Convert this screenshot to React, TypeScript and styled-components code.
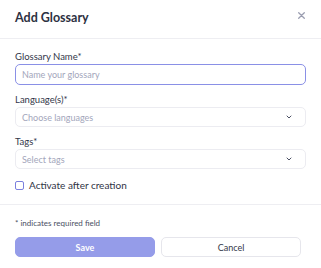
import React from 'react'
import styled, { createGlobalStyle } from 'styled-components'

const Global = createGlobalStyle`
  body {
    margin: 0;
    background: #ffffff;
    font-family: Lato, "Noto Sans", sans-serif;
  }
  * { box-sizing: border-box; }
`

const Chevron = () => (
  <svg width="8" height="8" viewBox="0 0 24 24" fill="none" stroke="#4a4f63" strokeWidth="3" strokeLinecap="round" strokeLinejoin="round">
    <path d="M6 9l6 6 6-6" />
  </svg>
)

const App = () => {
  return (
    <Modal>
      <Global />
      <Header>
        <Title>Add Glossary</Title>
        <Close aria-label="close">
          <svg width="7" height="7" viewBox="0 0 10 10" stroke="#9a9db0" strokeWidth="1.8" strokeLinecap="round">
            <path d="M1 1l8 8M9 1l-8 8" />
          </svg>
        </Close>
      </Header>
      <Body>
        <Field>
          <Label>Glossary Name*</Label>
          <Input placeholder="Name your glossary" $focused />
        </Field>
        <Field>
          <Label>Language(s)*</Label>
          <Select>
            <span>Choose languages</span>
            <Chevron />
          </Select>
        </Field>
        <Field>
          <Label>Tags*</Label>
          <Select>
            <span>Select tags</span>
            <Chevron />
          </Select>
        </Field>
        <CheckRow>
          <Box />
          <span>Activate after creation</span>
        </CheckRow>
      </Body>
      <Footer>
        <Note>* indicates required field</Note>
        <Buttons>
          <Button $primary>Save</Button>
          <Button>Cancel</Button>
        </Buttons>
      </Footer>
    </Modal>
  )
}

export default App

const Modal = styled.div`
  width: 321px;
  height: 268px;
  background: #fff;
  color: #2f3344;
`
const Header = styled.div`
  height: 39px;
  padding: 0 15px;
  display: flex;
  align-items: center;
  justify-content: space-between;
  border-bottom: 1px solid #eeeef2;
`
const Title = styled.h2`
  margin: 0;
  font-size: 12.5px;
  font-weight: 700;
  color: #2d3142;
  margin-top: -3px;
`
const Close = styled.button`
  border: 0;
  background: none;
  padding: 0;
  margin-right: 1px;
  margin-top: -8px;
  display: flex;
`
const Body = styled.div`
  padding: 12px 15px 12px;
  display: flex;
  flex-direction: column;
  gap: 9px;
  border-bottom: 1px solid #eeeef2;
`
const Field = styled.div`
  display: flex;
  flex-direction: column;
  gap: 1px;
`
const Label = styled.label`
  font-size: 9.5px;
  line-height: 12px;
  color: #33374a;
`
const Input = styled.input<{ $focused?: boolean }>`
  height: 21px;
  border-radius: 5px;
  border: 1.5px solid ${p => (p.$focused ? '#8a90e6' : '#ececf1')};
  padding: 0 6px;
  font-family: inherit;
  font-size: 9px;
  outline: none;
  &::placeholder { color: #a3a6bb; }
`
const Select = styled.div`
  height: 20px;
  border-radius: 5px;
  border: 1px solid #ececf1;
  padding: 0 12px 0 6px;
  display: flex;
  align-items: center;
  justify-content: space-between;
  font-size: 9px;
  color: #a3a6bb;
`
const CheckRow = styled.div`
  height: 14px;
  display: flex;
  align-items: center;
  gap: 5px;
  font-size: 10px;
  color: #2f3344;
`
const Box = styled.span`
  width: 9px;
  height: 9px;
  border: 1.3px solid #7b80de;
  border-radius: 2px;
`
const Footer = styled.div`
  padding: 13px 20px 0 15px;
  display: flex;
  flex-direction: column;
  gap: 9px;
`
const Note = styled.div`
  font-size: 8px;
  line-height: 10px;
  color: #4a4f63;
`
const Buttons = styled.div`
  display: flex;
  gap: 6px;
`
const Button = styled.button<{ $primary?: boolean }>`
  flex: 1;
  height: 20px;
  border-radius: 5px;
  font-family: inherit;
  font-size: 9px;
  font-weight: ${p => (p.$primary ? 700 : 400)};
  color: ${p => (p.$primary ? '#fff' : '#33374a')};
  background: ${p => (p.$primary ? '#959ce9' : '#fff')};
  border: 1px solid ${p => (p.$primary ? '#959ce9' : '#e6e6ec')};
`
